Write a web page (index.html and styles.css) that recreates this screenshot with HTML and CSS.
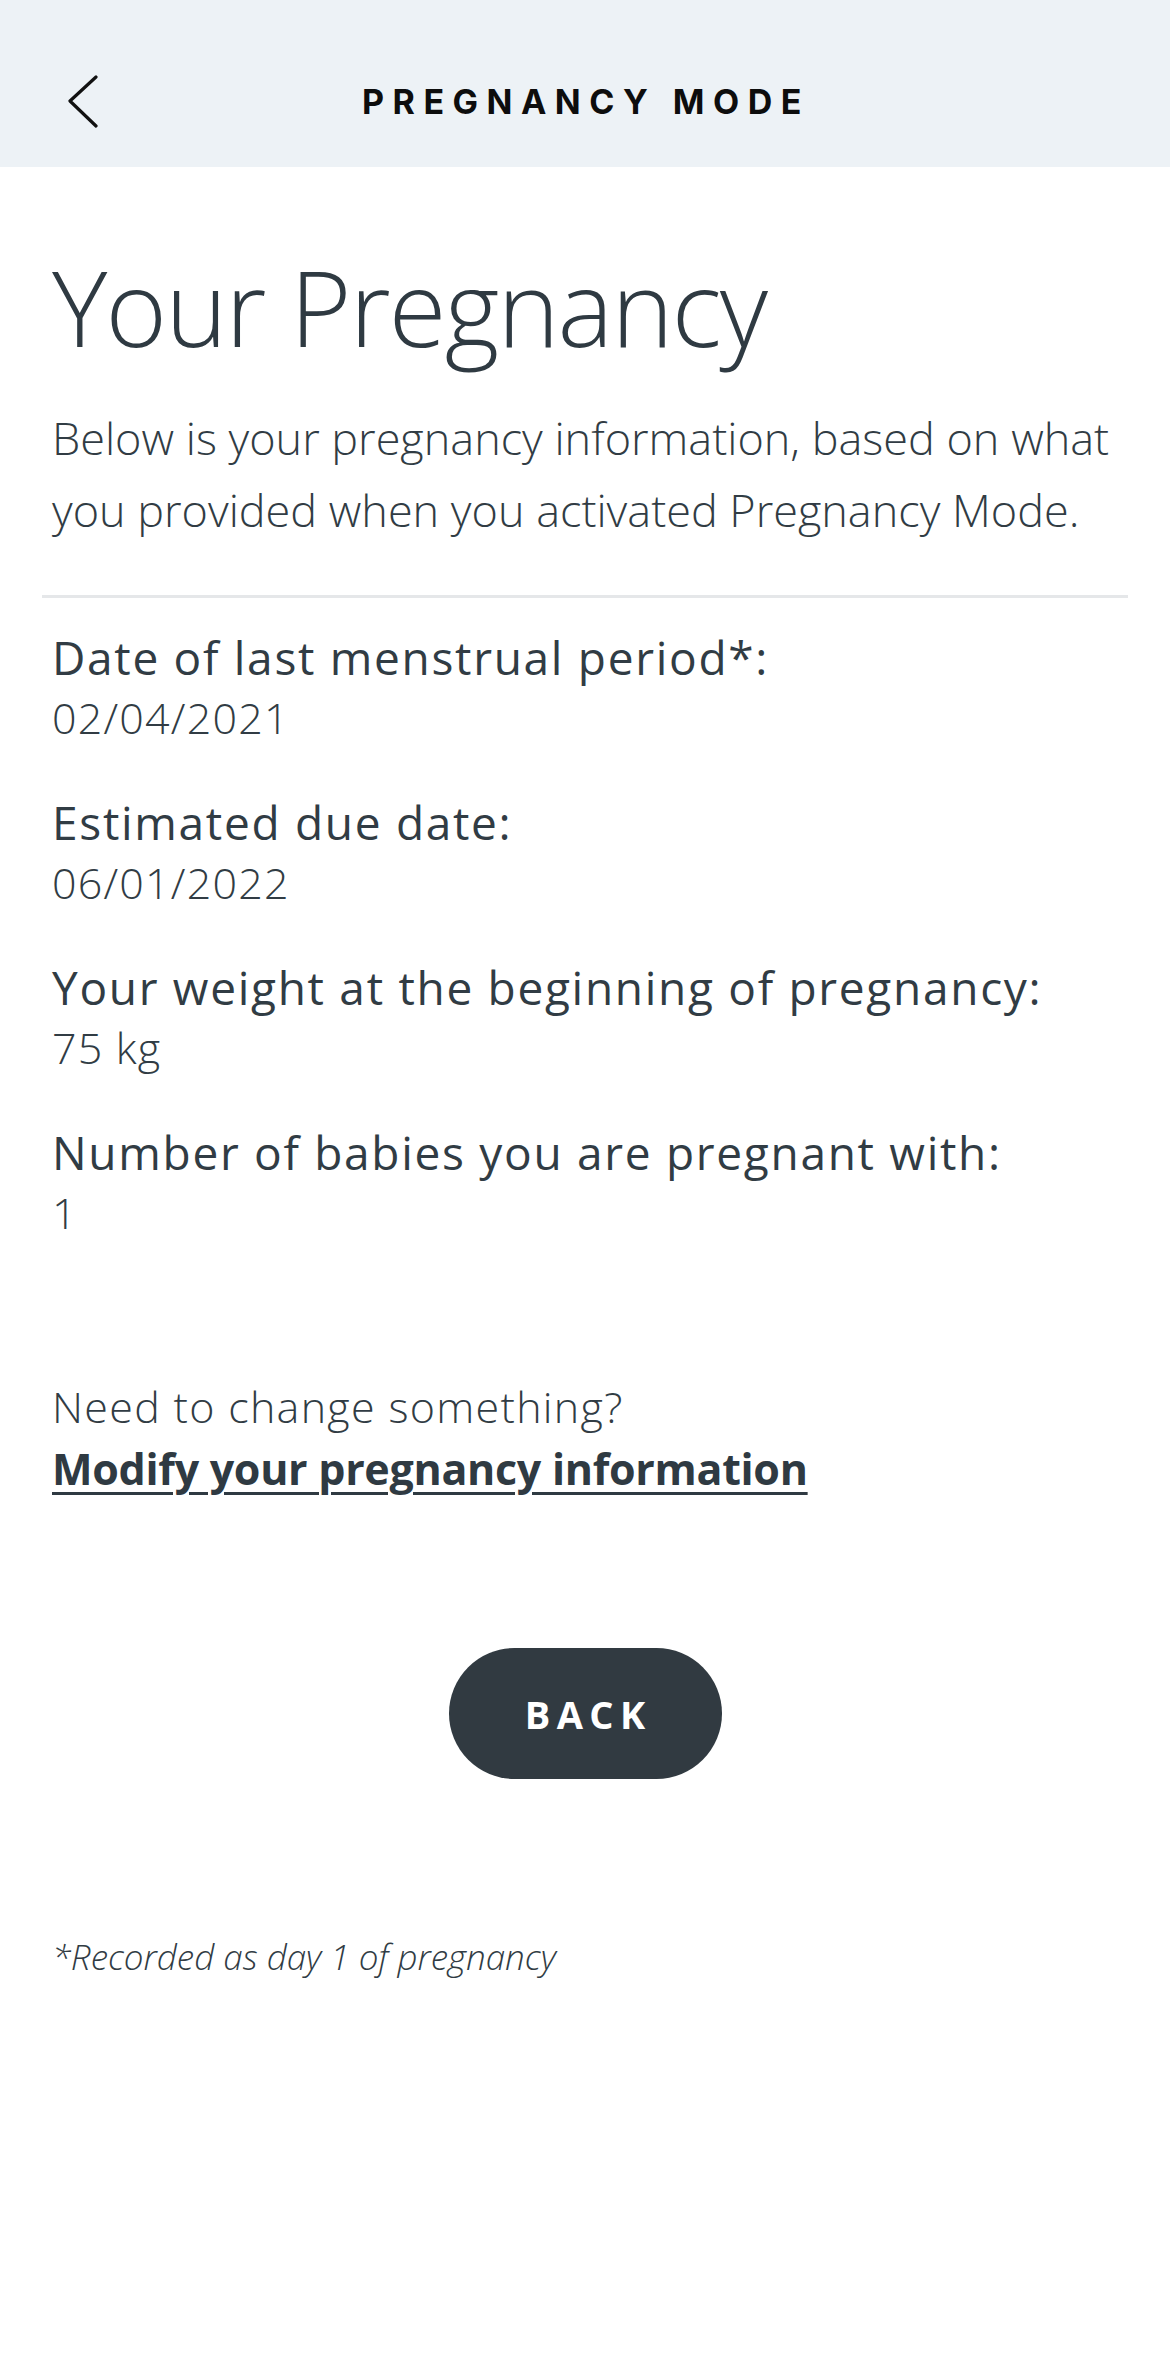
FILE: index.html
```html
<!DOCTYPE html>
<html lang="en">
<head>
<meta charset="utf-8">
<title>Pregnancy Mode</title>
<link rel="stylesheet" href="styles.css">
</head>
<body>
<header class="topbar">
  <button class="back-icon" aria-label="Back">
    <svg width="40" height="60" viewBox="0 0 40 60" aria-hidden="true">
      <polyline points="28,7 2,31 28,56" fill="none" stroke="#111" stroke-width="3.2" stroke-linecap="round" stroke-linejoin="round"/>
    </svg>
  </button>
  <h2 class="topbar-title">PREGNANCY MODE</h2>
  <span class="topbar-spacer"></span>
</header>
<main class="page">
  <h1 class="heading">Your Pregnancy</h1>
  <p class="intro">Below is your pregnancy information, based on what you provided when you activated Pregnancy Mode.</p>
  <hr class="divider">
  <dl class="info">
    <div class="info-item">
      <dt class="info-label">Date of last menstrual period*:</dt>
      <dd class="info-value">02/04/2021</dd>
    </div>
    <div class="info-item">
      <dt class="info-label">Estimated due date:</dt>
      <dd class="info-value">06/01/2022</dd>
    </div>
    <div class="info-item">
      <dt class="info-label">Your weight at the beginning of pregnancy:</dt>
      <dd class="info-value">75 kg</dd>
    </div>
    <div class="info-item">
      <dt class="info-label">Number of babies you are pregnant with:</dt>
      <dd class="info-value">1</dd>
    </div>
  </dl>
  <div class="change">
    <p class="change-text">Need to change something?</p>
    <a class="change-link" href="#">Modify your pregnancy information</a>
  </div>
  <div class="actions">
    <button class="btn-back">BACK</button>
  </div>
  <p class="footnote">*Recorded as day 1 of pregnancy</p>
</main>
</body>
</html>
```
FILE: styles.css
```css
* { box-sizing: border-box; }
html, body { margin: 0; padding: 0; background: #fff; }
body {
  font-family: "Open Sans", "Noto Sans", sans-serif;
  color: #313c44;
  width: 1170px;
}
.topbar {
  height: 167px;
  background: #edf2f6;
  display: grid;
  grid-template-columns: 1fr auto 1fr;
  align-items: center;
  padding: 36px 0 0 68px;
}
.back-icon {
  background: none;
  border: 0;
  padding: 0;
  width: 40px;
  height: 60px;
  display: flex;
  justify-self: start;
  margin-top: -3px;
}
.topbar-title {
  margin: 0;
  font-family: "Inter", "DejaVu Sans", sans-serif;
  font-weight: 700;
  font-size: 34px;
  letter-spacing: 8.5px;
  color: #0d0d0d;
  margin-left: -66px;
  line-height: 40px;
}
.page {
  padding: 0 52px 100px;
}
.heading {
  margin: 76px 0 0;
  font-weight: 300;
  font-size: 105px;
  line-height: 127px;
  letter-spacing: -1.8px;
  color: #2f3a42;
}
.intro {
  margin: 32px 0 0;
  font-weight: 300;
  font-size: 45px;
  line-height: 72px;
}
.divider {
  margin: 49px -10px 0;
  border: 0;
  height: 3px;
  background: #e5e7e9;
}
.info {
  margin: 28px 0 0;
  display: flex;
  flex-direction: column;
  gap: 43px;
}
.info-item { display: flex; flex-direction: column; }
.info-label {
  font-size: 46px;
  line-height: 62px;
  font-weight: 400;
  letter-spacing: 1.7px;
}
.info-value {
  margin: 0;
  font-size: 43px;
  line-height: 60px;
  font-weight: 300;
  letter-spacing: 1.2px;
}
.change {
  margin-top: 133px;
  display: flex;
  flex-direction: column;
  align-items: flex-start;
}
.change-text {
  margin: 0;
  font-size: 43px;
  line-height: 62px;
  font-weight: 300;
  letter-spacing: 1.3px;
}
.change-link {
  font-size: 43px;
  line-height: 62px;
  font-weight: 700;
  letter-spacing: -0.3px;
  color: #2f3a42;
  text-decoration: underline;
  text-decoration-thickness: 3px;
  text-underline-offset: 7px;
}
.actions {
  margin-top: 148px;
  display: flex;
  justify-content: center;
}
.btn-back {
  width: 273px;
  height: 131px;
  border: 0;
  border-radius: 66px;
  background: #313a41;
  color: #fff;
  font-family: "Open Sans", sans-serif;
  font-weight: 700;
  font-size: 38px;
  letter-spacing: 0.17em;
  padding: 0 0 0 0.17em;
}
.footnote {
  margin: 153px 0 0;
  font-size: 35px;
  line-height: 50px;
  font-style: italic;
  font-weight: 300;
}
```
